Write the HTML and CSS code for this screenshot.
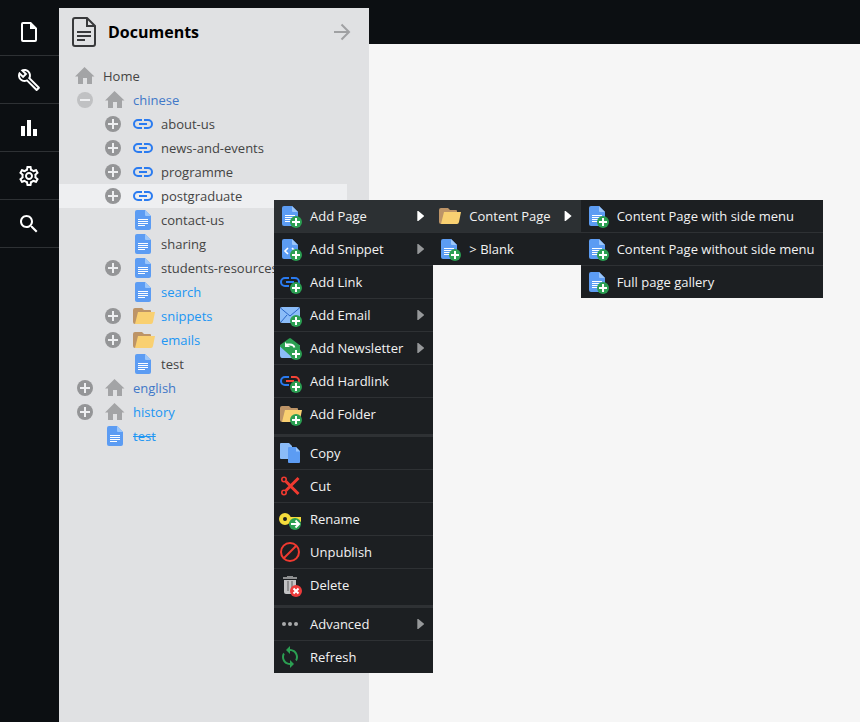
FILE: index.html
```html
<!DOCTYPE html>
<html lang="en">
<head>
<meta charset="utf-8">
<title>Documents</title>
<link rel="stylesheet" href="styles.css">
</head>
<body>
<svg class="sprite" aria-hidden="true">
  <symbol id="doc" viewBox="0 0 24 24"><path d="M4 2h8l6 6v12a2 2 0 0 1-2 2H4a2 2 0 0 1-2-2V4a2 2 0 0 1 2-2z" fill="#5c9cf3"/><path d="M12 2l6 6h-5a1 1 0 0 1-1-1z" fill="#9ac6fb"/><path d="M5 11.500h10M5 13.500h10M5 15.500h10M5 17.500h7" stroke="#fff"/></symbol>
  <symbol id="home" viewBox="0 0 24 24"><path d="M9.500 3L19.500 12.500H17V20H12V14H8v6H3v-7.500H0z" fill="#a3a4a6"/></symbol>
  <symbol id="link" viewBox="0 0 24 24"><path d="M9 8H5a4 4 0 0 0 0 8h4M11 8h4a4 4 0 0 1 0 8h-4M6 12h8" fill="none" stroke="#2a7bf0" stroke-width="2"/></symbol>
  <symbol id="folder" viewBox="0 0 24 24"><path d="M2 4h7l2 2h6q1 0 1 1v8L2 20q-2 0-2-2V6q0-2 2-2z" fill="#bd9467"/><path d="M5 8h17l-2 10q-.4 2-2 2H2z" fill="#f9d071"/></symbol>
  <symbol id="plus" viewBox="0 0 16 16"><circle cx="8" cy="8" r="8" fill="#949597"/><path d="M8 3v10M3 8h10" stroke="#eeeff1" stroke-width="2"/></symbol>
  <symbol id="minus" viewBox="0 0 16 16"><circle cx="8" cy="8" r="8" fill="#c0c1c3"/><path d="M3 8h10" stroke="#eeeff1" stroke-width="2"/></symbol>
  <symbol id="badge" viewBox="0 0 24 24"><circle cx="16" cy="18" r="6" fill="#2b9f52"/><path d="M16 14v8M12 18h8" stroke="#fff" stroke-width="2"/></symbol>
  <symbol id="add-doc" viewBox="0 0 24 24"><use href="#doc"/><use href="#badge"/></symbol>
  <symbol id="add-snippet" viewBox="0 0 24 24"><path d="M4 2h8l6 6v12a2 2 0 0 1-2 2H4a2 2 0 0 1-2-2V4a2 2 0 0 1 2-2z" fill="#5c9cf3"/><path d="M12 2l6 6h-5a1 1 0 0 1-1-1z" fill="#9ac6fb"/><path d="M8 11l-3 3 3 3M12 11l3 3-3 3" fill="none" stroke="#fff" stroke-width="1.600"/><use href="#badge"/></symbol>
  <symbol id="add-link" viewBox="0 0 24 24"><use href="#link"/><use href="#badge"/></symbol>
  <symbol id="add-email" viewBox="0 0 24 24"><rect y="4" width="20" height="16" rx="2" fill="#8bbcf8"/><path d="M.5 5L10 13l9.500-8M1 19l6-7" fill="none" stroke="#2a66c8"/><use href="#badge"/></symbol>
  <symbol id="add-newsletter" viewBox="0 0 24 24"><path d="M0 9h20v10q0 3-2 3H2q-2 0-2-3z" fill="#8bbcf8"/><path d="M9 2.500q1-.8 2 0l9 7v4l-10 6-10-9V9z" fill="#2b9f52"/><path d="M7 8.500h3q3.500 0 4.500 3" fill="none" stroke="#fff" stroke-width="1.800"/><path d="M5 6v5h5z" fill="#fff"/><use href="#badge"/></symbol>
  <symbol id="add-hardlink" viewBox="0 0 24 24"><path d="M9 8H5a4 4 0 0 0 0 8h4" fill="none" stroke="#2a7bf0" stroke-width="2"/><path d="M11 8h4a4 4 0 0 1 0 8h-4M6 12h8" fill="none" stroke="#f44336" stroke-width="2"/><use href="#badge"/></symbol>
  <symbol id="add-folder" viewBox="0 0 24 24"><use href="#folder"/><use href="#badge"/></symbol>
  <symbol id="copy" viewBox="0 0 24 24"><path d="M1 2h8l3 3v13H1q-1 0-1-1V3q0-1 1-1z" fill="#8bbcf8"/><path d="M9 6h7l4 4v11q0 1-1 1H9q-1 0-1-1V7q0-1 1-1z" fill="#5c9cf3"/><path d="M16 6l4 4.500h-4z" fill="#9ac6fb"/></symbol>
  <symbol id="cut" viewBox="0 0 24 24"><path d="M6 7.500L18.500 20M6 16.500L18.500 4" stroke="#f03a30" stroke-width="3"/><circle cx="4" cy="5.500" r="2.200" fill="none" stroke="#f03a30" stroke-width="1.600"/><circle cx="4" cy="18.500" r="2.200" fill="none" stroke="#f03a30" stroke-width="1.600"/></symbol>
  <symbol id="rename" viewBox="0 0 24 24"><path d="M9 10h12v5H9z" fill="#f4dc3c"/><circle cx="5" cy="12" r="4" fill="none" stroke="#f4dc3c" stroke-width="4"/><circle cx="15" cy="17" r="6" fill="#2b9f52"/><path d="M11 17h7M15.500 13.500L19 17l-3.500 3.500" fill="none" stroke="#fff" stroke-width="2"/></symbol>
  <symbol id="unpublish" viewBox="0 0 24 24"><g fill="none" stroke="#f03a30" stroke-width="2"><circle cx="10" cy="12" r="9"/><path d="M4 18L16 6"/></g></symbol>
  <symbol id="delete" viewBox="0 0 24 24"><path d="M7 3h6v1h4v2H3V4h4z" fill="#8e8f90"/><path d="M4 7h12v12q0 2-2 2H6q-2 0-2-2z" fill="#c1c2c3"/><path d="M8 8v10M12 8v10" stroke="#8e8f90" stroke-width="2"/><circle cx="16" cy="18" r="6" fill="#ec3b3b"/><path d="M13.500 15.500l5 5M18.500 15.500l-5 5" stroke="#fff" stroke-width="2"/></symbol>
  <symbol id="dots" viewBox="0 0 24 24"><g fill="#a9abac"><circle cx="4" cy="12" r="2"/><circle cx="10" cy="12" r="2"/><circle cx="16" cy="12" r="2"/></g></symbol>
  <symbol id="refresh" viewBox="-2 0 24 24"><path d="M8 4V1l4 4-4 4V6c-3.310 0-6 2.690-6 6 0 1.010.25 1.970.7 2.800l-1.460 1.460A7.930 7.930 0 0 1 0 12c0-4.420 3.580-8 8-8zm0 14c3.310 0 6-2.690 6-6 0-1.010-.25-1.970-.7-2.800l1.460-1.460A7.930 7.930 0 0 1 16 12c0 4.420-3.580 8-8 8v3l-4-4 4-4z" fill="#2b9f52" transform="matrix(-1 0 0 1 16 0)"/></symbol>
</svg>

<div class="app">
  <nav class="rail" aria-label="Main">
    <button class="rail-button" aria-label="Files"><svg class="icon" viewBox="0 0 24 24"><path d="M6 2h8l6 6v12a2 2 0 0 1-2 2H6a2 2 0 0 1-2-2V4a2 2 0 0 1 2-2zm0 2v16h12V9h-5V4z" fill="#fff" fill-rule="evenodd"/></svg></button>
    <button class="rail-button" aria-label="Tools"><svg class="icon" viewBox="0 0 24 24"><path fill="#fff" d="M22.610 18.990l-9.080-9.080c.93-2.340.45-5.100-1.440-7C9.790.61 6.210.4 3.660 2.260L7.500 6.110 6.080 7.520 2.250 3.690C.39 6.230.6 9.820 2.900 12.110c1.860 1.860 4.570 2.350 6.890 1.480l9.110 9.110c.39.39 1.020.39 1.410 0l2.300-2.300c.4-.38.4-1.010 0-1.410zm-3 1.600l-9.460-9.460c-.61.45-1.290.72-2 .82-1.360.2-2.790-.21-3.830-1.250C3.370 9.760 2.930 8.500 3 7.260l3.090 3.090 4.240-4.240-3.090-3.090c1.240-.07 2.490.37 3.440 1.310 1.080 1.080 1.490 2.570 1.240 3.960-.12.71-.42 1.370-.88 1.960l9.450 9.450-.88.89z"/></svg></button>
    <button class="rail-button" aria-label="Statistics"><svg class="icon" viewBox="0 0 24 24"><path d="M4 10h4v10H4zM10 4h4v16h-4zM16 13h4v7h-4z" fill="#fff"/></svg></button>
    <button class="rail-button" aria-label="Settings"><svg class="icon" viewBox="0 0 24 24"><path fill="#fff" d="M19.430 12.980c.04-.32.07-.64.07-.98 0-.34-.03-.66-.07-.98l2.110-1.650c.19-.15.24-.42.12-.64l-2-3.460c-.09-.16-.26-.25-.44-.25-.06 0-.12.01-.17.03l-2.490 1c-.52-.4-1.080-.73-1.690-.98l-.38-2.650C14.460 2.180 14.250 2 14 2h-4c-.25 0-.46.18-.49.42l-.38 2.650c-.61.25-1.170.59-1.690.98l-2.490-1c-.06-.02-.12-.03-.18-.03-.17 0-.34.09-.43.25l-2 3.460c-.13.22-.07.49.12.64l2.110 1.650c-.04.32-.07.65-.07.98 0 .33.03.66.07.98l-2.110 1.650c-.19.15-.24.42-.12.64l2 3.460c.09.16.26.25.44.25.06 0 .12-.01.17-.03l2.490-1c.52.4 1.080.73 1.690.98l.38 2.650c.03.24.24.42.49.42h4c.25 0 .46-.18.49-.42l.38-2.650c.61-.25 1.170-.59 1.690-.98l2.490 1c.06.02.12.03.18.03.17 0 .34-.09.43-.25l2-3.460c.12-.22.07-.49-.12-.64l-2.110-1.650zm-1.980-1.710c.04.31.05.52.05.73 0 .21-.02.43-.05.73l-.14 1.130.89.7 1.080.84-.7 1.210-1.270-.51-1.040-.42-.9.68c-.43.32-.84.56-1.250.73l-1.060.43-.16 1.130-.2 1.350h-1.400l-.19-1.350-.16-1.130-1.060-.43c-.43-.18-.83-.41-1.230-.71l-.91-.7-1.060.43-1.270.51-.7-1.210 1.080-.84.89-.7-.14-1.130c-.03-.31-.05-.54-.05-.74s.02-.43.05-.73l.14-1.130-.89-.7-1.080-.84.7-1.210 1.270.51 1.040.42.9-.68c.43-.32.84-.56 1.250-.73l1.060-.43.16-1.130.2-1.350h1.390l.19 1.350.16 1.130 1.060.43c.43.18.83.41 1.230.71l.91.7 1.060-.43 1.270-.51.7 1.210-1.070.85-.89.7.14 1.130zM12 8c-2.210 0-4 1.790-4 4s1.790 4 4 4 4-1.790 4-4-1.790-4-4-4zm0 6c-1.100 0-2-.9-2-2s.9-2 2-2 2 .9 2 2-.9 2-2 2z"/></svg></button>
    <button class="rail-button" aria-label="Search"><svg class="icon" viewBox="0 0 24 24"><path fill="#fff" d="M15.500 14h-.79l-.28-.27C15.410 12.590 16 11.110 16 9.500 16 5.910 13.090 3 9.500 3S3 5.910 3 9.500 5.910 16 9.500 16c1.610 0 3.090-.59 4.230-1.570l.27.28v.79l5 4.990L20.490 19l-4.990-5zm-6 0C7.010 14 5 11.990 5 9.500S7.010 5 9.500 5 14 7.010 14 9.500 11.990 14 9.500 14z"/></svg></button>
  </nav>

  <section class="panel">
    <header class="panel-header">
      <svg class="panel-icon" viewBox="0 0 24 30"><g fill="none" stroke="#38393b" stroke-width="2"><path d="M3 1h12l8 8v18a2 2 0 0 1-2 2H3a2 2 0 0 1-2-2V3a2 2 0 0 1 2-2z"/><path d="M15 1v8h8M5 15h14M5 19h14M5 23h8"/></g></svg>
      <h1 class="panel-title">Documents</h1>
      <button class="panel-arrow" aria-label="Expand"><svg class="arrow-icon" viewBox="0 0 18 18"><path d="M1 9h15M8.500 1.500L16 9l-7.500 7.500" fill="none" stroke="#a0a1a3" stroke-width="2"/></svg></button>
    </header>
    <ul class="tree">
      <li class="node root"><svg class="icon"><use href="#home"/></svg><a href="#">Home</a></li>
      <li class="node"><button class="toggle" aria-label="Collapse"><svg><use href="#minus"/></svg></button><svg class="icon"><use href="#home"/></svg><a class="site" href="#">chinese</a></li>
      <li>
        <ul class="branch">
          <li class="node"><button class="toggle" aria-label="Expand"><svg><use href="#plus"/></svg></button><svg class="icon"><use href="#link"/></svg><a href="#">about-us</a></li>
          <li class="node"><button class="toggle" aria-label="Expand"><svg><use href="#plus"/></svg></button><svg class="icon"><use href="#link"/></svg><a href="#">news-and-events</a></li>
          <li class="node"><button class="toggle" aria-label="Expand"><svg><use href="#plus"/></svg></button><svg class="icon"><use href="#link"/></svg><a href="#">programme</a></li>
          <li class="node selected"><button class="toggle" aria-label="Expand"><svg><use href="#plus"/></svg></button><svg class="icon"><use href="#link"/></svg><a href="#">postgraduate</a></li>
          <li class="node leaf"><svg class="icon"><use href="#doc"/></svg><a href="#">contact-us</a></li>
          <li class="node leaf"><svg class="icon"><use href="#doc"/></svg><a href="#">sharing</a></li>
          <li class="node"><button class="toggle" aria-label="Expand"><svg><use href="#plus"/></svg></button><svg class="icon"><use href="#doc"/></svg><a href="#">students-resources</a></li>
          <li class="node leaf"><svg class="icon"><use href="#doc"/></svg><a class="hidden-page" href="#">search</a></li>
          <li class="node"><button class="toggle" aria-label="Expand"><svg><use href="#plus"/></svg></button><svg class="icon"><use href="#folder"/></svg><a class="hidden-page" href="#">snippets</a></li>
          <li class="node"><button class="toggle" aria-label="Expand"><svg><use href="#plus"/></svg></button><svg class="icon"><use href="#folder"/></svg><a class="hidden-page" href="#">emails</a></li>
          <li class="node leaf"><svg class="icon"><use href="#doc"/></svg><a href="#">test</a></li>
        </ul>
      </li>
      <li class="node"><button class="toggle" aria-label="Expand"><svg><use href="#plus"/></svg></button><svg class="icon"><use href="#home"/></svg><a class="site" href="#">english</a></li>
      <li class="node"><button class="toggle" aria-label="Expand"><svg><use href="#plus"/></svg></button><svg class="icon"><use href="#home"/></svg><a class="hidden-page" href="#">history</a></li>
      <li class="node leaf"><svg class="icon"><use href="#doc"/></svg><a class="hidden-page unpublished" href="#">test</a></li>
    </ul>
  </section>

  <main class="workspace"></main>
</div>

<ul class="menu context-menu">
  <li><button class="item parent active"><svg class="icon"><use href="#add-doc"/></svg>Add Page</button>
    <ul class="menu submenu">
      <li><button class="item parent active"><svg class="icon"><use href="#folder"/></svg>Content Page</button>
        <ul class="menu submenu">
          <li><button class="item"><svg class="icon"><use href="#add-doc"/></svg>Content Page with side menu</button></li>
          <li><button class="item"><svg class="icon"><use href="#add-doc"/></svg>Content Page without side menu</button></li>
          <li><button class="item"><svg class="icon"><use href="#add-doc"/></svg>Full page gallery</button></li>
        </ul>
      </li>
      <li><button class="item"><svg class="icon"><use href="#add-doc"/></svg>&gt; Blank</button></li>
    </ul>
  </li>
  <li><button class="item parent"><svg class="icon"><use href="#add-snippet"/></svg>Add Snippet</button></li>
  <li><button class="item"><svg class="icon"><use href="#add-link"/></svg>Add Link</button></li>
  <li><button class="item parent"><svg class="icon"><use href="#add-email"/></svg>Add Email</button></li>
  <li><button class="item parent"><svg class="icon"><use href="#add-newsletter"/></svg>Add Newsletter</button></li>
  <li><button class="item"><svg class="icon"><use href="#add-hardlink"/></svg>Add Hardlink</button></li>
  <li class="group-end"><button class="item"><svg class="icon"><use href="#add-folder"/></svg>Add Folder</button></li>
  <li><button class="item"><svg class="icon"><use href="#copy"/></svg>Copy</button></li>
  <li><button class="item"><svg class="icon"><use href="#cut"/></svg>Cut</button></li>
  <li><button class="item"><svg class="icon"><use href="#rename"/></svg>Rename</button></li>
  <li><button class="item"><svg class="icon"><use href="#unpublish"/></svg>Unpublish</button></li>
  <li class="group-end"><button class="item"><svg class="icon"><use href="#delete"/></svg>Delete</button></li>
  <li><button class="item parent"><svg class="icon"><use href="#dots"/></svg>Advanced</button></li>
  <li><button class="item"><svg class="icon"><use href="#refresh"/></svg>Refresh</button></li>
</ul>
</body>
</html>
```
FILE: styles.css
```css
* {
  box-sizing: border-box;
}

body {
  margin: 0;
  background: #f6f6f6;
  color: #444;
  font: 13px/24px "Open Sans", "Noto Sans", sans-serif;
}

ul {
  margin: 0;
  padding: 0;
  list-style: none;
}

button {
  margin: 0;
  padding: 0;
  border: 0;
  background: none;
  color: inherit;
  font: inherit;
}

.sprite {
  position: absolute;
  width: 0;
  height: 0;
}

.icon,
symbol {
  overflow: visible;
}

.icon {
  display: block;
  flex: none;
  width: 24px;
  height: 24px;
}

.app {
  display: flex;
  min-height: 100vh;
  padding-top: 8px;
  background: linear-gradient(#0c0f12 44px, #f6f6f6 44px);
}

.rail {
  flex: none;
  width: 59px;
  margin-top: -8px;
  padding-top: 8px;
  background: #0c0f12;
}

.rail-button {
  display: flex;
  align-items: center;
  width: 100%;
  height: 48px;
  padding-left: 17px;
  border-bottom: 1px solid #2e3134;
}

.panel {
  flex: none;
  width: 310px;
  background: #e0e1e3;
}

.workspace {
  flex: 1;
}

.panel-header {
  display: flex;
  align-items: center;
  gap: 12px;
  height: 48px;
  padding: 0 18px 0 13px;
}

.panel-icon {
  width: 24px;
  height: 30px;
}

.panel-title {
  flex: 1;
  margin: 0;
  color: #000;
  font-size: 16px;
  font-weight: 700;
}

.panel-arrow {
  display: flex;
}

.arrow-icon {
  width: 18px;
  height: 18px;
}

.tree {
  margin: 8px 22px 0 0;
}

.node {
  display: flex;
  align-items: center;
  height: 24px;
  padding-left: 18px;
}

.node.root {
  padding-left: 16px;
}

.node.leaf {
  padding-left: 46px;
}

.branch .node {
  padding-left: 46px;
}

.branch .node.leaf {
  padding-left: 74px;
}

.node.selected {
  background: #eeeff1;
}

.node .icon {
  margin-right: 4px;
}

.toggle {
  display: flex;
  width: 28px;
}

.toggle svg {
  width: 16px;
  height: 16px;
}

.node a {
  color: #444;
  text-decoration: none;
}

.node a.site {
  color: #4178c8;
}

.node a.hidden-page {
  color: #2196f3;
}

.node a.unpublished {
  text-decoration: line-through;
}

.menu {
  position: absolute;
  background: #1c1f22;
  color: #f2f2f2;
  white-space: nowrap;
}

.context-menu {
  top: 200px;
  left: 274px;
}

.submenu {
  top: 0;
  left: 100%;
}

.menu li {
  position: relative;
  border-bottom: 1px solid #2e3134;
}

.menu li:last-child {
  border-bottom: 0;
}

.menu li.group-end {
  padding-bottom: 4px;
  border-bottom: 3px solid #2e3134;
}

.item {
  display: flex;
  align-items: center;
  width: 100%;
  height: 32px;
  padding: 0 9px 0 6px;
}

.item .icon {
  margin-right: 6px;
}

.item.active {
  background: #2c3033;
}

/* Arrow at the right end of a 21px slot, which keeps it clear of the label */
.item.parent::after {
  content: "";
  width: 21px;
  height: 10px;
  margin-left: auto;
  background: #96989a;
  clip-path: polygon(14px 0, 15px 0, 21px 50%, 15px 100%, 14px 100%);
}

.item.active::after {
  background: #fff;
}
```
